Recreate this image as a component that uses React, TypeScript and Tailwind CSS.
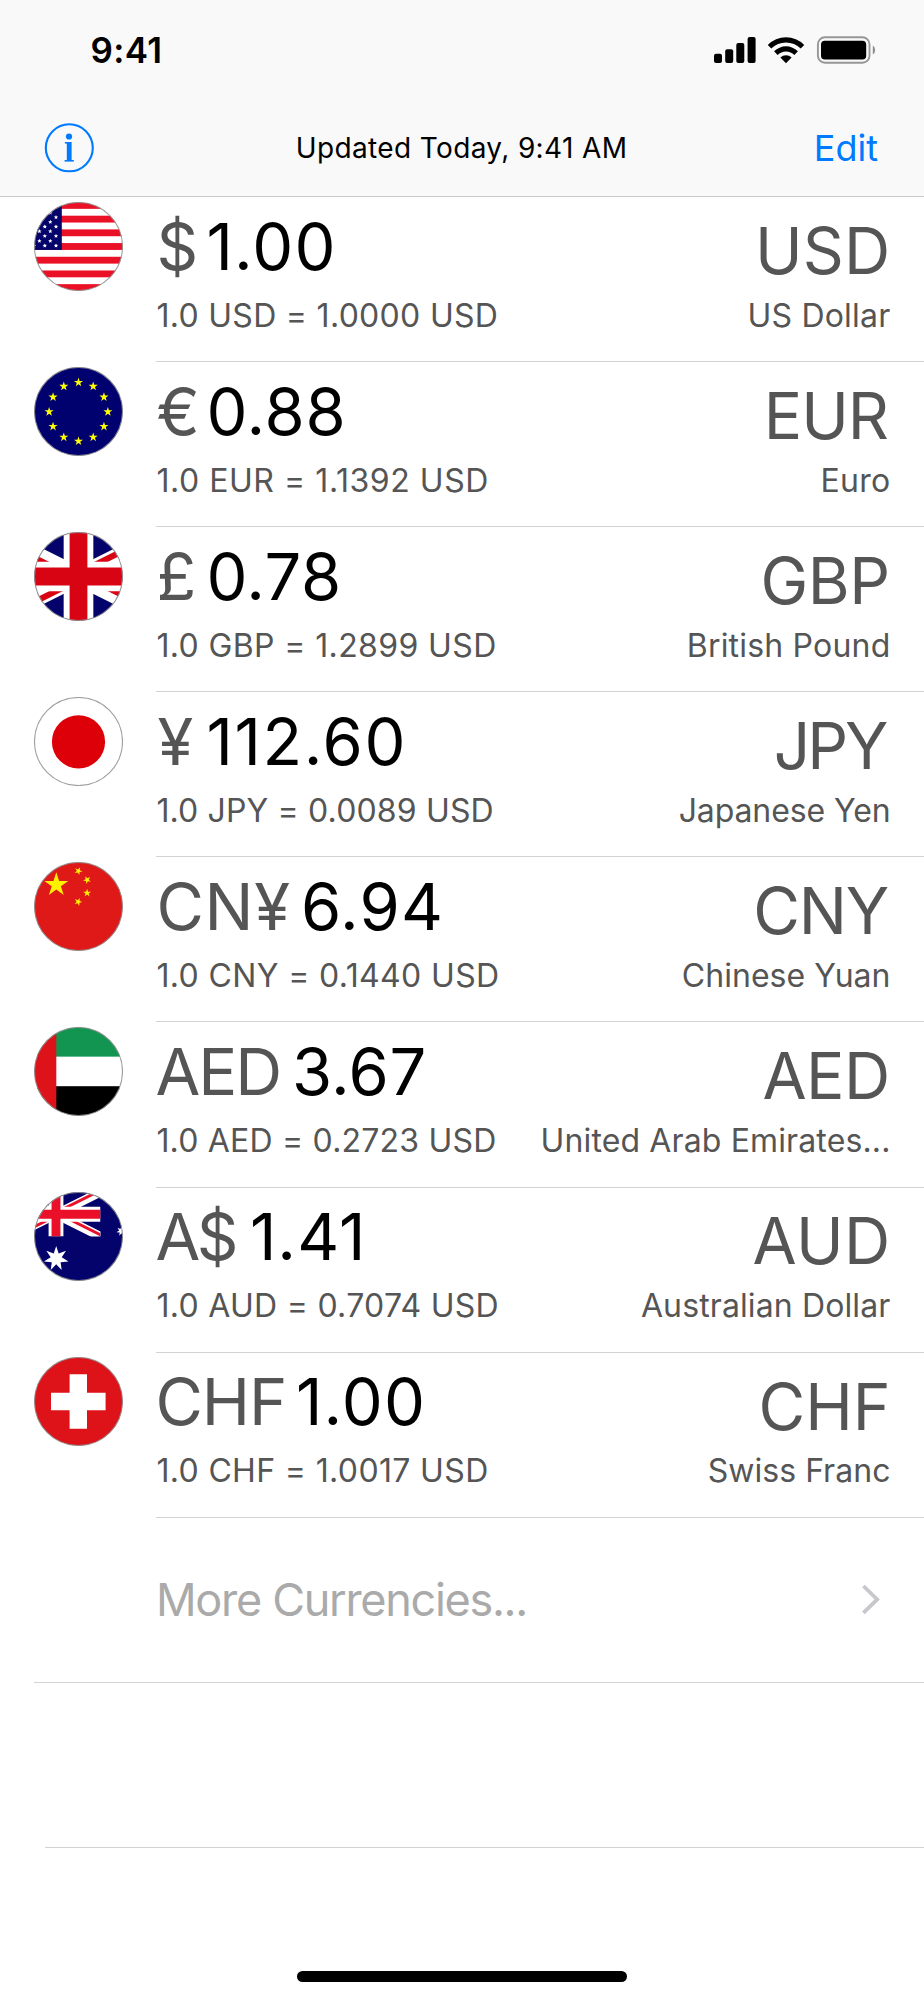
import React from 'react';

// Points of a regular star, first tip pointing up unless rotated
const starPoints = (cx: number, cy: number, r: number, tips = 5, inner = 0.382, rotate = 0) => {
  const points: string[] = [];
  for (let i = 0; i < tips * 2; i++) {
    const radius = i % 2 === 0 ? r : r * inner;
    const angle = (Math.PI * i) / tips - Math.PI / 2 + (rotate * Math.PI) / 180;
    points.push(`${(cx + radius * Math.cos(angle)).toFixed(2)},${(cy + radius * Math.sin(angle)).toFixed(2)}`);
  }
  return points.join(' ');
};

const Flag: React.FC<{ id: string; children: React.ReactNode }> = ({ id, children }) => (
  <svg viewBox="0 0 89 89" className="mt-[4.5px] size-[89px] shrink-0">
    <clipPath id={`flag-${id}`}>
      <circle cx="44.5" cy="44.5" r="44.2" />
    </clipPath>
    <g clipPath={`url(#flag-${id})`}>{children}</g>
    <circle cx="44.5" cy="44.5" r="44" fill="none" stroke="#8e8e8e" strokeOpacity="0.85" strokeWidth="1.1" />
  </svg>
);

const UnionJack: React.FC<{ id: string; red: string }> = ({ id, red }) => (
  <>
    <clipPath id={`jack-${id}`}>
      <path d="M30,15 h30 v15 z v15 h-30 z h-30 v-15 z v-15 h30 z" />
    </clipPath>
    <path d="M0,0 h60 v30 h-60 z" fill="#03036b" />
    <path d="M0,0 L60,30 M60,0 L0,30" stroke="#fff" strokeWidth="6" />
    <path d="M0,0 L60,30 M60,0 L0,30" stroke={red} strokeWidth="4" clipPath={`url(#jack-${id})`} />
    <path d="M30,0 v30 M0,15 h60" stroke="#fff" strokeWidth="10" />
    <path d="M30,0 v30 M0,15 h60" stroke={red} strokeWidth="6" />
  </>
);

const usStars = [
  [22, 15.3], [16.3, 10.8], [16.3, 20], [22, 24.7], [10.8, 24.7], [16.3, 29.3], [5.4, 29.3], [22, 34],
  [10.8, 34], [16.3, 39], [5.4, 39], [22, 43.7], [10.8, 43.7], [0, 43.7], [0, 34],
];

const flags: Record<string, React.ReactNode> = {
  USD: (
    <>
      <rect width="89" height="89" fill="#fff" />
      {[0, 2, 4, 6, 8, 10, 12].map((n) => (
        <rect key={n} y={n * 6.846} width="89" height="6.846" fill="#ea1126" />
      ))}
      <rect width="27.8" height="47.9" fill="#03036b" />
      {usStars.map(([x, y], i) => (
        <polygon key={i} points={starPoints(x, y, 2.3, 5, 0.45)} fill="#fff" />
      ))}
    </>
  ),
  EUR: (
    <>
      <rect width="89" height="89" fill="#00006f" />
      {Array.from({ length: 12 }, (_, i) => {
        const a = (i * Math.PI) / 6;
        return <polygon key={i} points={starPoints(44.5 + 29.4 * Math.sin(a), 44.8 - 29.4 * Math.cos(a), 4.8)} fill="#ff0" />;
      })}
    </>
  ),
  GBP: (
    <svg x="-44.5" y="0" width="178" height="89" viewBox="0 0 60 30">
      <UnionJack id="gbp" red="#d80414" />
    </svg>
  ),
  JPY: (
    <>
      <rect width="89" height="89" fill="#fff" />
      <circle cx="44.5" cy="44.8" r="26.6" fill="#de0008" />
    </>
  ),
  CNY: (
    <>
      <rect width="89" height="89" fill="#df1918" />
      <polygon points={starPoints(22.3, 22.8, 12.6)} fill="#fff000" />
      <polygon points={starPoints(44.4, 9, 4.2, 5, 0.382, 24)} fill="#fff000" />
      <polygon points={starPoints(53.1, 17.9, 4.2, 5, 0.382, 45)} fill="#fff000" />
      <polygon points={starPoints(53.1, 31, 4.2, 5, 0.382, 0)} fill="#fff000" />
      <polygon points={starPoints(44.2, 39.8, 4.2, 5, 0.382, 22)} fill="#fff000" />
    </>
  ),
  AED: (
    <>
      <rect width="89" height="29.8" fill="#129551" />
      <rect y="29.8" width="89" height="29.4" fill="#fff" />
      <rect y="59.2" width="89" height="30" fill="#000" />
      <rect width="22.3" height="89" fill="#de1219" />
    </>
  ),
  AUD: (
    <>
      <rect width="89" height="89" fill="#03036b" />
      <svg x="-22.5" y="0" width="89" height="44.5" viewBox="0 0 60 30">
        <UnionJack id="aud" red="#eb1029" />
      </svg>
      <polygon points={starPoints(22.2, 66.6, 12.6, 7, 0.45)} fill="#fff" />
      <polygon points={starPoints(87.5, 39, 5.2, 7, 0.45)} fill="#fff" />
    </>
  ),
  CHF: (
    <>
      <rect width="89" height="89" fill="#de1219" />
      <path d="M44.3,17.2 v54.6 M17,44.5 h54.6" stroke="#fff" strokeWidth="17.4" />
    </>
  ),
};

const currencies = [
  {
    code: 'USD', symbol: '$', amount: '1.00', rate: '1.0 USD = 1.0000 USD', name: 'US Dollar',
    symbolClass: 'w-[50px]', amountClass: 'tracking-[1.16px]', rateClass: 'tracking-[0.3px]', codeClass: 'tracking-[0.2px]', nameClass: 'tracking-[0.22px]'
  },
  {
    code: 'EUR', symbol: '€', amount: '0.88', rate: '1.0 EUR = 1.1392 USD', name: 'Euro',
    symbolClass: 'w-[50px]', amountClass: 'tracking-[0.72px]', rateClass: 'tracking-[0.55px]', codeClass: 'tracking-[-1px] pr-[2.5px]', nameClass: 'tracking-[0.28px]'
  },
  {
    code: 'GBP', symbol: '£', amount: '0.78', rate: '1.0 GBP = 1.2899 USD', name: 'British Pound',
    symbolClass: 'w-[50px]', amountClass: 'tracking-[0.49px]', rateClass: 'tracking-[0.38px]', codeClass: 'tracking-[-0.5px] pr-px', nameClass: 'tracking-[0.2px]'
  },
  {
    code: 'JPY', symbol: '¥', amount: '112.60', rate: '1.0 JPY = 0.0089 USD', name: 'Japanese Yen',
    symbolClass: 'w-[50px] pl-px', amountClass: 'tracking-[1.62px]', rateClass: 'tracking-[0.15px]', codeClass: 'tracking-[-3px] pr-[5px]', nameClass: 'tracking-[-0.1px]'
  },
  {
    code: 'CNY', symbol: 'CN¥', amount: '6.94', rate: '1.0 CNY = 0.1440 USD', name: 'Chinese Yuan',
    symbolClass: 'w-[144.5px] tracking-[0.7px]', amountClass: 'tracking-[1.1px]', rateClass: 'tracking-[0.37px]', codeClass: 'tracking-[-1.2px] pr-[2.5px]', nameClass: 'tracking-[0.02px]'
  },
  {
    code: 'AED', symbol: 'AED', amount: '3.67', rate: '1.0 AED = 0.2723 USD', name: 'United Arab Emirates...',
    symbolClass: '-ml-px w-[136.5px] tracking-[-2px]', amountClass: 'tracking-[0.48px]', rateClass: 'tracking-[0.2px]', codeClass: 'tracking-[-0.6px] pr-px', nameClass: 'tracking-[0.13px]'
  },
  {
    code: 'AUD', symbol: 'A$', amount: '1.41', rate: '1.0 AUD = 0.7074 USD', name: 'Australian Dollar',
    symbolClass: '-ml-px w-[94.5px] tracking-[-3.6px]', amountClass: 'tracking-[1.04px]', rateClass: 'tracking-[0.29px]', codeClass: 'tracking-[0.4px]', nameClass: 'tracking-[0.12px]'
  },
  {
    code: 'CHF', symbol: 'CHF', amount: '1.00', rate: '1.0 CHF = 1.0017 USD', name: 'Swiss Franc',
    symbolClass: '-ml-px w-[140.5px] tracking-[-1.1px]', amountClass: 'tracking-[1.16px]', rateClass: 'tracking-[0.35px]', codeClass: '', nameClass: 'tracking-[0.04px]'
  }
];

const StatusBar: React.FC = () => (
  <div className="flex h-[100px] items-center justify-between pl-[90.5px] pr-[47px]">
    <span className="text-[35px] leading-[36px] font-semibold tracking-[0.3px]">9:41</span>
    <svg viewBox="0 0 164 28" className="h-7 w-[164px]">
      {/* Signal */}
      <rect x="1" y="17.7" width="8" height="9.3" rx="2" />
      <rect x="12.2" y="13.3" width="8" height="13.7" rx="2" />
      <rect x="23.3" y="7" width="8" height="20" rx="2" />
      <rect x="34.6" y="1" width="8" height="26" rx="2" />
      {/* Wi-Fi */}
      <path d="M54.8,9 A25.5,25.5 0 0 1 91.2,9 L87.7,12.6 A20.5,20.5 0 0 0 58.3,12.6 Z" />
      <path d="M61.1,15.3 A16.8,16.8 0 0 1 84.9,15.3 L81.4,18.9 A11.8,11.8 0 0 0 64.6,18.9 Z" />
      <path d="M67.4,21.6 A8,8 0 0 1 78.6,21.6 L73,27.3 Z" />
      {/* Battery */}
      <rect x="104.9" y="1.3" width="51.6" height="25.4" rx="7" fill="none" stroke="#979797" strokeWidth="1.9" />
      <rect x="108" y="4.8" width="45.2" height="18.8" rx="3.8" />
      <path d="M159.8,9.5 A5.5,5.5 0 0 1 159.8,18.5 Z" fill="#8a8a8a" />
    </svg>
  </div>
);

const NavBar: React.FC = () => (
  <div className="grid h-[95px] grid-cols-[1fr_auto_1fr] items-center pl-[44px] pr-[46px]">
    <button className="size-[50px]">
      <svg viewBox="0 0 50 50" className="size-[50px]" fill="#007aff">
        <circle cx="25.3" cy="24.8" r="23.5" fill="none" stroke="#007aff" strokeWidth="2.1" />
        <circle cx="25" cy="13.5" r="3.1" />
        <rect x="22.8" y="19" width="4.8" height="19" />
        <rect x="20.9" y="19" width="4" height="1.6" />
        <rect x="20.6" y="37" width="9.2" height="1.6" />
      </svg>
    </button>
    <h1 className="pl-px text-[28px] leading-none tracking-[0.37px]">Updated Today, 9:41 AM</h1>
    <button className="justify-self-end text-[36px] leading-none text-[#007aff]">Edit</button>
  </div>
);

const App: React.FC = () => {
  return (
    <div className="flex h-[2000px] w-[924px] flex-col overflow-hidden bg-white font-[Inter,sans-serif] whitespace-nowrap text-black">
      <header className="h-[197px] shrink-0 border-b border-[#cacaca] bg-[#f9f9f9]">
        <StatusBar />
        <NavBar />
      </header>

      <main className="flex-1">
        {currencies.map((c) => (
          <div key={c.code} className="flex h-[165.1px] pl-[34px]">
            <Flag id={c.code}>{flags[c.code]}</Flag>
            <div className="ml-[33.4px] flex flex-1 justify-between border-b border-[#d2d2d2] pr-[33.5px] text-[#555]">
              <div className="pt-[16.7px]">
                <div className="flex text-[65px] leading-none">
                  <span className={`shrink-0 ${c.symbolClass}`}>{c.symbol}</span>
                  <span className={`text-black ${c.amountClass}`}>{c.amount}</span>
                </div>
                <div className={`mt-[21px] text-[32px] leading-none ${c.rateClass}`}>{c.rate}</div>
              </div>
              <div className="pt-[21.9px] text-right">
                <div className={`text-[64px] leading-none ${c.codeClass}`}>{c.code}</div>
                <div className={`mt-[16.8px] text-[32px] leading-none ${c.nameClass}`}>{c.name}</div>
              </div>
            </div>
          </div>
        ))}

        <div className="ml-[34px] flex h-[165.1px] items-center justify-between border-b border-[#d2d2d2] pt-px pr-[43px] pl-[122px]">
          <span className="text-[45px] leading-[46px] tracking-[-1.3px] text-[#aaa]">More Currencies...</span>
          <svg viewBox="0 0 20 32" className="h-8 w-5" fill="none" stroke="#c7c7cc" strokeWidth="3.8">
            <path d="M2.4,2 L16.2,15.4 L2.4,28.8" />
          </svg>
        </div>
        <div className="ml-[45px] h-[165.1px] border-b border-[#d2d2d2]" />
      </main>

      <div className="mb-[18px] ml-[297px] h-[11px] w-[330px] shrink-0 rounded-full bg-black" />
    </div>
  );
};

export default App;
